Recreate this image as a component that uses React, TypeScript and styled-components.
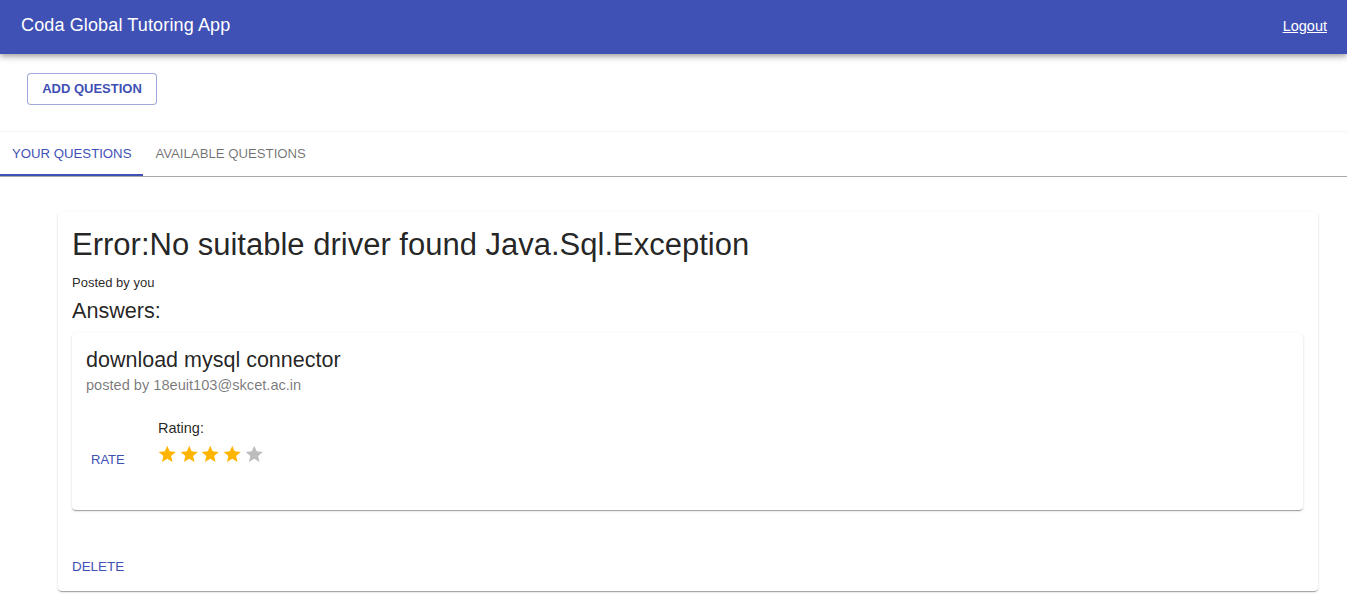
import React from "react";
import styled, { createGlobalStyle } from "styled-components";

const Global = createGlobalStyle`
  html, body { margin: 0; padding: 0; background: #ffffff; }
  body { font-family: "Liberation Sans", Arial, sans-serif; color: rgba(0,0,0,0.87); }
  * { box-sizing: border-box; }
`;

const Page = styled.div`
  display: flex;
  flex-direction: column;
  min-height: 604px;
`;

const AppBar = styled.header`
  height: 54px;
  background: #3f51b5;
  color: #fff;
  display: flex;
  align-items: center;
  justify-content: space-between;
  padding: 0 20px 4px 21px;
  box-shadow: 0px 2px 4px -1px rgba(0,0,0,0.2), 0px 4px 5px 0px rgba(0,0,0,0.14), 0px 1px 10px 0px rgba(0,0,0,0.12);
  position: relative;
  z-index: 2;
`;

const AppTitle = styled.h1`
  margin: 0;
  font-size: 18px;
  line-height: 24px;
  font-weight: 400;
  letter-spacing: 0.135px;
`;

const LogoutLink = styled.a`
  color: #fff;
  font-size: 14.5px;
  line-height: 24px;
  margin-top: 2px;
  text-decoration: underline;
  cursor: pointer;
`;

const ActionBar = styled.div`
  padding: 19px 27px 26px;
  display: flex;
`;

const OutlinedButton = styled.button`
  height: 32px;
  width: 130px;
  border: 1px solid rgba(63,81,181,0.5);
  border-radius: 4px;
  background: #fff;
  color: #3f51b5;
  font-family: "Liberation Sans", Arial, sans-serif;
  font-size: 13px;
  font-weight: 700;
  padding: 0 0 2px;
  cursor: pointer;
`;

const TabBar = styled.nav`
  display: flex;
  height: 46px;
  background: #fff;
  border-top: 1px solid #f4f4f4;
  border-bottom: 1px solid #a9a9a9;
`;

const Tab = styled.div<{ $active?: boolean }>`
  position: relative;
  display: flex;
  align-items: center;
  justify-content: center;
  padding: 0 12px 1px 12px;
  font-size: 13.2px;
  color: ${(p) => (p.$active ? "#3f51b5" : "rgba(0,0,0,0.56)")};
  &::after {
    content: "";
    position: absolute;
    left: 0;
    right: 0;
    bottom: 0;
    height: 2px;
    background: ${(p) => (p.$active ? "#3f51b5" : "transparent")};
  }
`;

const Content = styled.main`
  padding: 35px 29px 0 58px;
`;

const Card = styled.section<{ $inner?: boolean }>`
  background: #fff;
  border-radius: 4px;
  box-shadow: 0px 2px 1px -1px rgba(0,0,0,0.2), 0px 1px 1px 0px rgba(0,0,0,0.14), 0px 1px 3px 0px rgba(0,0,0,0.12);
  padding: ${(p) => (p.$inner ? "14px 14px 40px 14px" : "15px 15px 16px 14px")};
`;

const QuestionTitle = styled.h2`
  margin: 0;
  font-size: 31px;
  line-height: 36px;
  font-weight: 400;
  color: rgba(0,0,0,0.87);
`;

const PostedBy = styled.p`
  margin: 12px 0 0;
  font-size: 13px;
  line-height: 16px;
`;

const AnswersHeading = styled.h3`
  margin: 8px 0 10px;
  font-size: 21.6px;
  line-height: 24px;
  font-weight: 400;
`;

const AnswerText = styled.h4`
  margin: 0;
  font-size: 21.5px;
  line-height: 26px;
  font-weight: 400;
`;

const AnswerAuthor = styled.p`
  margin: 3px 0 0;
  font-size: 14.6px;
  line-height: 18px;
  color: rgba(0,0,0,0.54);
`;

const RatingRow = styled.div`
  display: flex;
  align-items: flex-end;
  margin-top: 26px;
`;

const TextButton = styled.button`
  border: none;
  background: transparent;
  color: #3f51b5;
  font-family: "Liberation Sans", Arial, sans-serif;
  font-size: 13px;
  line-height: 17px;
  padding: 0 0 0 5px;
  text-align: left;
  cursor: pointer;
`;

const RateButton = styled(TextButton)`
  width: 64px;
  margin-bottom: 2px;
`;

const DeleteButton = styled(TextButton)`
  margin-top: 48px;
  padding: 0;
  font-size: 13.4px;
`;

const RatingColumn = styled.div`
  margin-left: 8px;
  display: flex;
  flex-direction: column;
`;

const RatingLabel = styled.span`
  font-size: 14.5px;
  line-height: 17px;
`;

const Stars = styled.div`
  display: flex;
  margin-top: 7px;
  margin-bottom: 5px;
  margin-left: -1px;
`;

const StarIcon = styled.svg<{ $filled: boolean }>`
  width: 20.5px;
  height: 20.5px;
  margin-right: 1.2px;
  fill: ${(p) => (p.$filled ? "#ffb400" : "#bdbdbd")};
`;

const Star = ({ filled }: { filled: boolean }) => (
  <StarIcon $filled={filled} viewBox="0 0 24 24">
    <path d="M12 17.27L18.18 21l-1.64-7.03L22 9.24l-7.19-.61L12 2 9.19 8.63 2 9.24l5.46 4.73L5.82 21z" />
  </StarIcon>
);

export default function App() {
  const rating = 4;
  return (
    <Page>
      <Global />
      <AppBar>
        <AppTitle>Coda Global Tutoring App</AppTitle>
        <LogoutLink>Logout</LogoutLink>
      </AppBar>
      <ActionBar>
        <OutlinedButton>ADD QUESTION</OutlinedButton>
      </ActionBar>
      <TabBar>
        <Tab $active>YOUR QUESTIONS</Tab>
        <Tab>AVAILABLE QUESTIONS</Tab>
      </TabBar>
      <Content>
        <Card>
          <QuestionTitle>Error:No suitable driver found Java.Sql.Exception</QuestionTitle>
          <PostedBy>Posted by you</PostedBy>
          <AnswersHeading>Answers:</AnswersHeading>
          <Card $inner>
            <AnswerText>download mysql connector</AnswerText>
            <AnswerAuthor>posted by 18euit103@skcet.ac.in</AnswerAuthor>
            <RatingRow>
              <RateButton>RATE</RateButton>
              <RatingColumn>
                <RatingLabel>Rating:</RatingLabel>
                <Stars>
                  {[1, 2, 3, 4, 5].map((i) => (
                    <Star key={i} filled={i <= rating} />
                  ))}
                </Stars>
              </RatingColumn>
            </RatingRow>
          </Card>
          <DeleteButton>DELETE</DeleteButton>
        </Card>
      </Content>
    </Page>
  );
}
